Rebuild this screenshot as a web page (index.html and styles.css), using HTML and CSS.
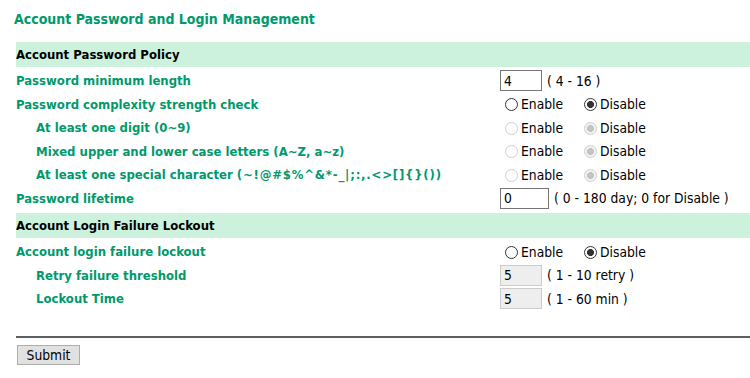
FILE: index.html
```html
<!DOCTYPE html>
<html>
<head>
<meta charset="utf-8">
<link rel="stylesheet" href="styles.css">
</head>
<body>
<div class="page">
  <h1 class="title">Account Password and Login Management</h1>

  <div class="section">Account Password Policy</div>
  <div class="rows">
    <div class="row">
      <div class="label">Password minimum length</div>
      <div class="value"><input class="num" type="text" value="4"><span class="hint">( 4 - 16 )</span></div>
    </div>
    <div class="row">
      <div class="label">Password complexity strength check</div>
      <div class="value">
        <label class="opt first"><input type="radio" name="cx">Enable</label>
        <label class="opt"><input type="radio" name="cx" checked>Disable</label>
      </div>
    </div>
    <div class="row sub">
      <div class="label">At least one digit (0~9)</div>
      <div class="value">
        <label class="opt first"><input type="radio" name="d" disabled>Enable</label>
        <label class="opt"><input type="radio" name="d" checked disabled>Disable</label>
      </div>
    </div>
    <div class="row sub">
      <div class="label">Mixed upper and lower case letters (A~Z, a~z)</div>
      <div class="value">
        <label class="opt first"><input type="radio" name="m" disabled>Enable</label>
        <label class="opt"><input type="radio" name="m" checked disabled>Disable</label>
      </div>
    </div>
    <div class="row sub">
      <div class="label">At least one special character <span class="sym">(~!@#$%^&amp;*-_|;:,.&lt;&gt;[]{}())</span></div>
      <div class="value">
        <label class="opt first"><input type="radio" name="s" disabled>Enable</label>
        <label class="opt"><input type="radio" name="s" checked disabled>Disable</label>
      </div>
    </div>
    <div class="row">
      <div class="label">Password lifetime</div>
      <div class="value"><input class="num wide" type="text" value="0"><span class="hint">( 0 - 180 day; 0 for Disable )</span></div>
    </div>
  </div>

  <div class="section">Account Login Failure Lockout</div>
  <div class="rows">
    <div class="row">
      <div class="label">Account login failure lockout</div>
      <div class="value">
        <label class="opt first"><input type="radio" name="lk">Enable</label>
        <label class="opt"><input type="radio" name="lk" checked>Disable</label>
      </div>
    </div>
    <div class="row sub">
      <div class="label">Retry failure threshold</div>
      <div class="value"><input class="num" type="text" value="5" disabled><span class="hint">( 1 - 10 retry )</span></div>
    </div>
    <div class="row sub">
      <div class="label">Lockout Time</div>
      <div class="value"><input class="num" type="text" value="5" disabled><span class="hint">( 1 - 60 min )</span></div>
    </div>
  </div>

  <hr class="rule">
  <button class="submit" type="button">Submit</button>
</div>
</body>
</html>
```

FILE: styles.css
```css
html, body {
  margin: 0;
  padding: 0;
  background: #fff;
}
body {
  font-family: "DejaVu Sans", sans-serif;
  font-stretch: condensed;
  color: #000;
  overflow: hidden;
}
.page {
  padding-left: 16px;
}
.title {
  margin: 0 0 14px -2px;
  padding-top: 10px;
  font-size: 14px;
  line-height: 18px;
  font-weight: bold;
  color: #00996b;
}
.section {
  height: 25px;
  line-height: 25px;
  background: #ccf2dd;
  font-size: 13px;
  font-weight: bold;
  color: #000;
}
.rows {
  padding: 2px 0 3px;
}
.row {
  display: flex;
  align-items: center;
  height: 23.5px;
}
.label {
  width: 484px;
  flex: none;
  font-size: 13px;
  font-weight: bold;
  color: #00996b;
}
.row.sub .label {
  padding-left: 20px;
  width: 464px;
}
.sym {
  letter-spacing: 0.8px;
}
.value {
  display: flex;
  align-items: center;
  font-size: 13.75px;
  color: #000;
}
.num {
  box-sizing: border-box;
  width: 42px;
  height: 21px;
  margin: 0 5px 0 0;
  padding: 0 0 0 3px;
  border: 1px solid #767676;
  background: #fff;
  font-family: "DejaVu Sans", sans-serif;
  font-stretch: condensed;
  font-size: 13.75px;
  color: #000;
  outline: none;
}
.num.wide {
  width: 49px;
}
.num:disabled {
  background: #eeeeee;
  border-color: #cccccc;
  color: #000;
}
.opt {
  display: inline-flex;
  align-items: center;
}
.opt.first {
  width: 79px;
}
.opt input {
  appearance: none;
  -webkit-appearance: none;
  box-sizing: border-box;
  width: 13px;
  height: 13px;
  margin: 1px 3px 0 5px;
  border: 1px solid #333;
  border-radius: 50%;
  background: #fff;
}
.opt input:checked {
  background: radial-gradient(circle, #333 3.2px, #fff 3.8px);
}
.opt input:disabled {
  border-color: #cfcfcf;
}
.opt input:disabled:checked {
  background: radial-gradient(circle, #c4c4c4 3.2px, #f2f2f2 3.8px);
}
.rule {
  margin: 22px 0 0 0;
  height: 0;
  border: 0;
  border-top: 2px solid #5f5f5f;
}
.submit {
  margin: 7px 0 0 1px;
  width: 63px;
  height: 20px;
  padding: 0;
  border: 1px solid #adadad;
  background: #e1e1e1;
  font-family: "DejaVu Sans", sans-serif;
  font-stretch: condensed;
  font-size: 13.75px;
  color: #000;
}
```
